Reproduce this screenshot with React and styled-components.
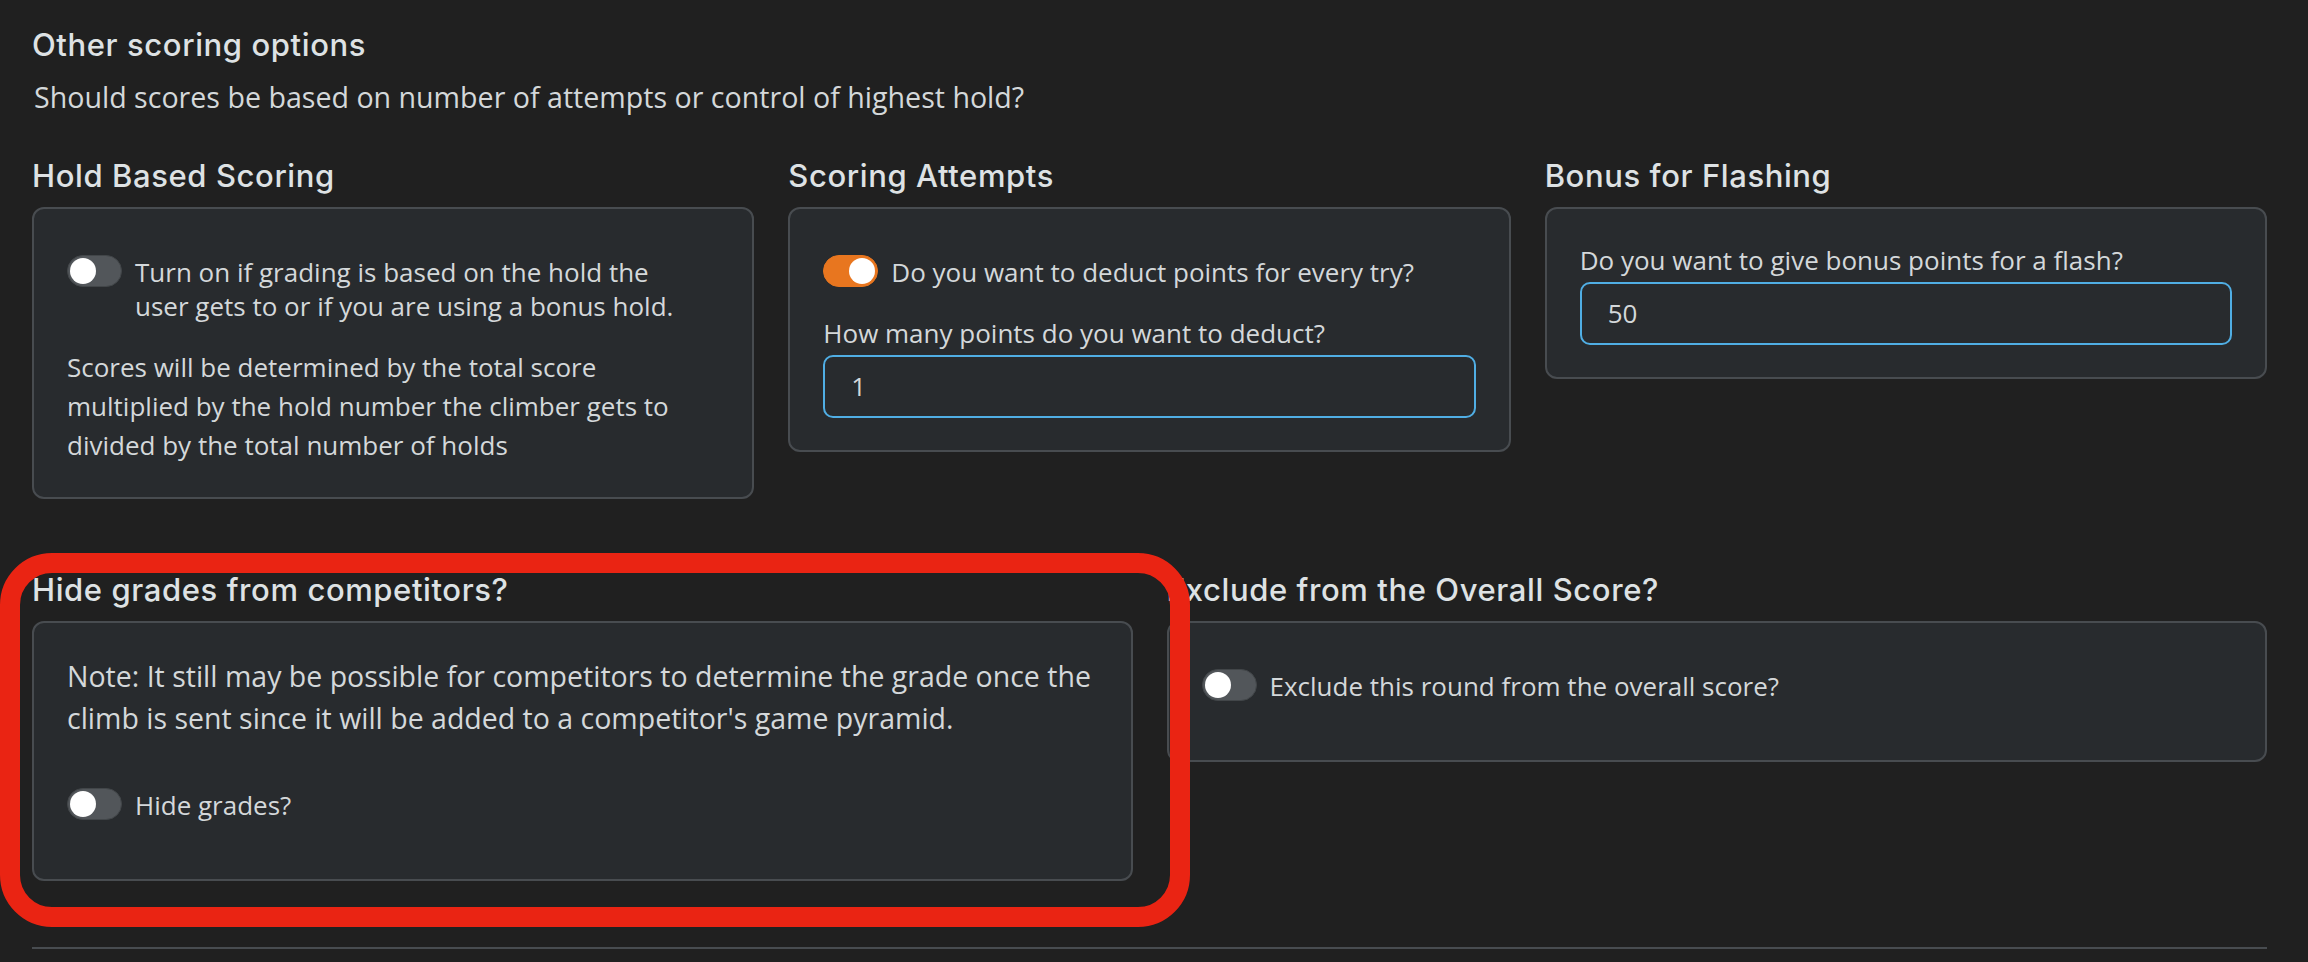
import React from "react";
import styled, { createGlobalStyle } from "styled-components";

const GlobalStyle = createGlobalStyle`
  html, body {
    margin: 0;
    background: rgb(32, 32, 32);
  }
  * {
    box-sizing: border-box;
  }
`;

const Page = styled.div`
  padding: 26px 41px 0 32px;
  min-height: 962px;
  background: rgb(32, 32, 32);
  color: rgb(212, 216, 218);
  font-family: "Open Sans", "Noto Sans", sans-serif;
`;

const Title = styled.h2`
  margin: 0 0 14px;
  font-family: Inter, "Noto Sans", sans-serif;
  font-weight: 500;
  font-size: 31px;
  line-height: 1.2;
  letter-spacing: 0.6px;
  color: rgb(222, 226, 228);
`;

const Subtitle = styled.p`
  margin: 0 0 39px 2px;
  font-size: 28.6px;
  line-height: 1.42;
`;

const OptionsRow = styled.div`
  display: grid;
  grid-template-columns: repeat(${props => props.cols}, 1fr);
  column-gap: 34px;
  align-items: start;
  margin-bottom: ${props => props.spaceAfter || "0"};
`;

const Section = styled.section`
  position: relative;
`;

const SectionTitle = styled(Title)`
  margin: 0 0 13px;
`;

const Card = styled.div`
  background: rgb(40, 43, 46);
  border: 2px solid rgb(72, 76, 80);
  border-radius: 12px;
  padding: 32px 33px;
`;

const SwitchRow = styled.label`
  display: flex;
  align-items: flex-start;
  gap: 13px;
  margin: 14px 0 25px;
  padding-right: 30px;
`;

const Switch = styled.span`
  position: relative;
  flex: none;
  width: 55px;
  height: 32px;
  border-radius: 16px;
  background: ${props => (props.checked ? "rgb(232, 118, 31)" : "rgb(82, 86, 90)")};
  border: 1px solid ${props => (props.checked ? "rgb(232, 118, 31)" : "rgb(66, 70, 73)")};

  &::after {
    content: "";
    position: absolute;
    top: 2px;
    left: ${props => (props.checked ? "25px" : "2px")};
    width: 26px;
    height: 26px;
    border-radius: 50%;
    background: #fff;
  }
`;

const SwitchLabel = styled.span`
  font-size: 26px;
  line-height: 34px;
`;

const Help = styled.p`
  margin: 0;
  font-size: 26px;
  line-height: 39px;
`;

const FieldLabel = styled.div`
  margin-bottom: 2px;
  font-size: 26px;
  line-height: 39px;
`;

const NumberInput = styled.input`
  display: block;
  width: 100%;
  height: 63px;
  padding: 0 26px;
  border: 2px solid rgb(80, 174, 228);
  border-radius: 10px;
  background: rgb(40, 43, 46);
  color: rgb(212, 216, 218);
  font-family: "Open Sans", "Noto Sans", sans-serif;
  font-size: 26px;
  outline: none;
`;

const Note = styled.p`
  margin: 0 0 49px;
  font-size: 28.5px;
  line-height: 42px;
`;

const Highlight = styled.div`
  position: absolute;
  left: -32px;
  top: -18px;
  right: -57px;
  bottom: -46px;
  border: 20px solid rgb(234, 36, 19);
  border-radius: 52px;
  pointer-events: none;
  z-index: 2;
`;

const Divider = styled.hr`
  margin: 66px 0 0;
  border: none;
  border-top: 2px solid rgb(72, 76, 80);
`;

const Toggle = ({ checked, children }) => (
  <SwitchRow>
    <Switch checked={checked} />
    <SwitchLabel>{children}</SwitchLabel>
  </SwitchRow>
);

export default function App() {
  return (
    <Page>
      <GlobalStyle />
      <Title>Other scoring options</Title>
      <Subtitle>
        Should scores be based on number of attempts or control of highest hold?
      </Subtitle>

      <OptionsRow cols={3} spaceAfter="72px">
        <Section>
          <SectionTitle>Hold Based Scoring</SectionTitle>
          <Card>
            <Toggle>
              Turn on if grading is based on the hold the user gets to or if you
              are using a bonus hold.
            </Toggle>
            <Help>
              Scores will be determined by the total score multiplied by the hold
              number the climber gets to divided by the total number of holds
            </Help>
          </Card>
        </Section>

        <Section>
          <SectionTitle>Scoring Attempts</SectionTitle>
          <Card>
            <Toggle checked>Do you want to deduct points for every try?</Toggle>
            <FieldLabel>How many points do you want to deduct?</FieldLabel>
            <NumberInput type="number" defaultValue="1" />
          </Card>
        </Section>

        <Section>
          <SectionTitle>Bonus for Flashing</SectionTitle>
          <Card>
            <FieldLabel>Do you want to give bonus points for a flash?</FieldLabel>
            <NumberInput type="number" defaultValue="50" />
          </Card>
        </Section>
      </OptionsRow>

      <OptionsRow cols={2}>
        <Section>
          <SectionTitle>Hide grades from competitors?</SectionTitle>
          <Card>
            <Note>
              Note: It still may be possible for competitors to determine the
              grade once the climb is sent since it will be added to a
              competitor's game pyramid.
            </Note>
            <Toggle>Hide grades?</Toggle>
          </Card>
          <Highlight />
        </Section>

        <Section>
          <SectionTitle>Exclude from the Overall Score?</SectionTitle>
          <Card>
            <Toggle>Exclude this round from the overall score?</Toggle>
          </Card>
        </Section>
      </OptionsRow>

      <Divider />
    </Page>
  );
}
